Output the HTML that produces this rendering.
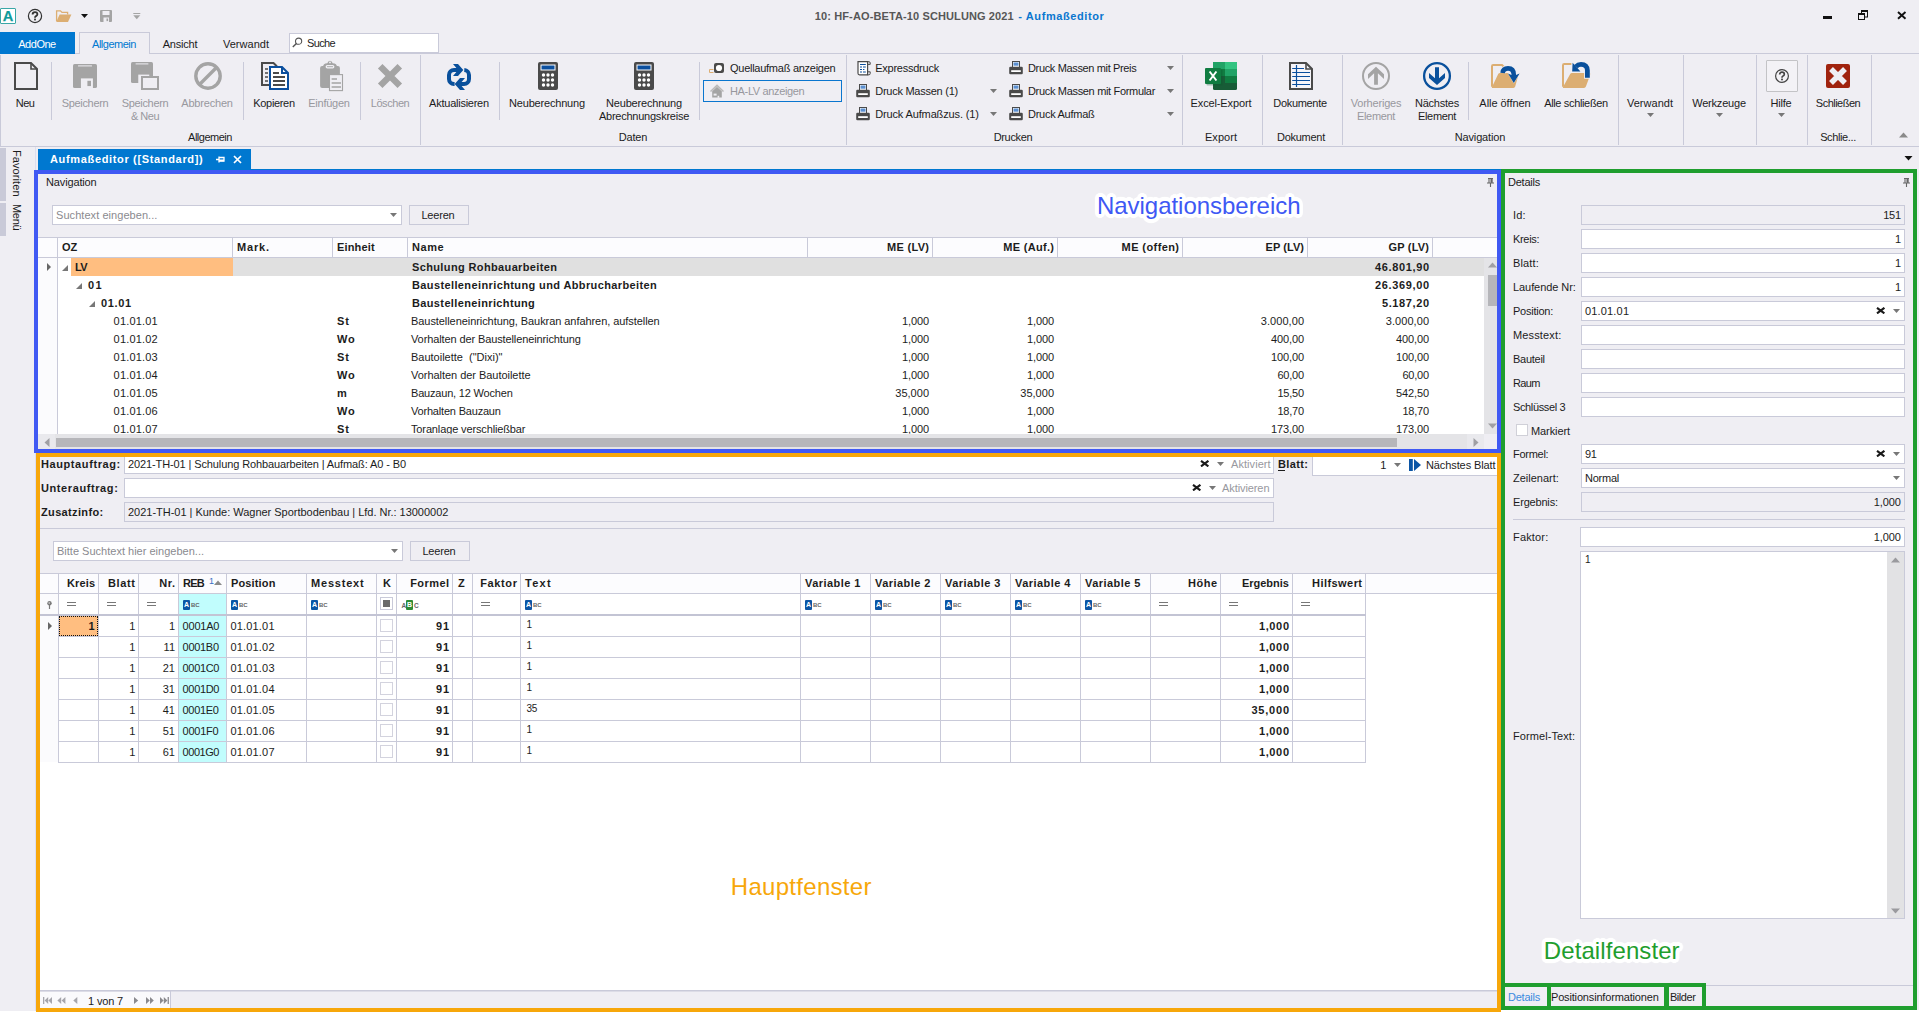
<!DOCTYPE html><html><head><meta charset="utf-8"><title>Aufmasseditor</title><style>
html,body{margin:0;padding:0}
body{width:1919px;height:1012px;overflow:hidden;background:#efeef3;font-family:"Liberation Sans",sans-serif;font-size:11px;color:#1c1c1c;position:relative}
div,span.t,svg{position:absolute;box-sizing:border-box}
span.t{white-space:pre;letter-spacing:-0.25px}
.b{font-weight:bold;letter-spacing:0.35px !important}
.d{color:#98989e}
.w{color:#fff}
</style></head><body>
<div style="left:0px;top:8px;width:16px;height:16px;background:#fff;border:1px solid #3aa7a7;border-radius:1px"></div>
<span class="t " style="left:-192px;width:400px;text-align:center;top:8.2px;line-height:16px;font-weight:bold;font-size:14.6px;color:#0e9a9a;letter-spacing:0;-webkit-text-stroke:0.25px #0e9a9a">A</span>
<svg style="left:27px;top:8px" width="16" height="16" viewBox="0 0 16 16"><circle cx="8" cy="8" r="6.6" fill="none" stroke="#333" stroke-width="1.2"/><path d="M5.6,6.5 Q5.6,4.1 8,4.1 Q10.4,4.1 10.4,6.2 Q10.4,7.4 9,8.1 Q8,8.6 8,9.7" fill="none" stroke="#333" stroke-width="1.8"/><rect x="7.1" y="10.6" width="1.8" height="1.8" fill="#333"/></svg>
<svg style="left:55px;top:9px" width="17" height="14" viewBox="0 0 17 14"><path d="M1.6,12 V1.8 H5.5 L7,3.4 H12.6 V5.5" fill="none" stroke="#dcae72" stroke-width="1.3"/><path d="M4.6,5.6 H16.4 L13,13 H1.2 Z" fill="#dcae72"/></svg>
<svg style="left:81px;top:14px" width="8" height="5" viewBox="0 0 8 5"><path d="M0,0 H7 L3.5,4 Z" fill="#111"/></svg>
<svg style="left:100px;top:10px" width="13" height="13" viewBox="0 0 13 13"><rect x="0" y="0" width="12" height="12" rx="1" fill="#a4a4a4"/><rect x="2.5" y="1" width="7" height="4" fill="#efeef3"/><rect x="3.5" y="7.5" width="5.5" height="4.5" fill="#efeef3"/><rect x="6.5" y="8.5" width="1.6" height="2.6" fill="#a4a4a4"/></svg>
<svg style="left:132.5px;top:13px" width="8" height="7" viewBox="0 0 8 7"><rect x="0.3" y="0" width="7" height="1" fill="#a4a4a4"/><path d="M0.3,2.3 H7.3 L3.8,6.3 Z" fill="#a4a4a4"/></svg>
<span class="t b" style="left:814.8px;top:9.0px;line-height:14px;letter-spacing:0.117px !important;color:#575757">10: HF-AO-BETA-10 SCHULUNG 2021</span>
<span class="t b" style="left:1018.3px;top:9.0px;line-height:14px;letter-spacing:0.591px !important;color:#0a76cf">- Aufmaßeditor</span>
<div style="left:1823px;top:16px;width:9px;height:3px;background:#111"></div>
<svg style="left:1858px;top:10px" width="10" height="10" viewBox="0 0 10 10"><rect x="3.5" y="1" width="6" height="6" fill="none" stroke="#111" stroke-width="1"/><rect x="3" y="0" width="7" height="2" fill="#111"/><rect x="0.5" y="4" width="6" height="5.5" fill="#efeef3" stroke="#111" stroke-width="1"/><rect x="0" y="3" width="7" height="2" fill="#111"/></svg>
<svg style="left:1897px;top:11px" width="10" height="9" viewBox="0 0 10 9"><path d="M1,1 L8.5,7.8 M8.5,1 L1,7.8" stroke="#111" stroke-width="1.9"/></svg>
<div style="left:0px;top:53px;width:1919px;height:1px;background:#c9cad9"></div>
<div style="left:0px;top:32px;width:75px;height:22px;background:#0078d0"></div>
<span class="t w" style="left:-163px;width:400px;text-align:center;top:36.5px;line-height:14px;letter-spacing:-0.473px !important;">AddOne</span>
<div style="left:79px;top:32px;width:71px;height:22px;background:#efeef3;border:1px solid #c9cad9;border-bottom:none"></div>
<span class="t " style="left:-86px;width:400px;text-align:center;top:37.0px;line-height:14px;letter-spacing:-0.500px !important;color:#0078d0">Allgemein</span>
<span class="t " style="left:-20px;width:400px;text-align:center;top:37.0px;line-height:14px;letter-spacing:-0.229px !important;">Ansicht</span>
<span class="t " style="left:46px;width:400px;text-align:center;top:37.0px;line-height:14px;letter-spacing:0.048px !important;">Verwandt</span>
<div style="left:289px;top:33px;width:150px;height:20px;background:#fff;border:1px solid #c9cad9"></div>
<svg style="left:292px;top:37px" width="11" height="11" viewBox="0 0 11 11"><circle cx="6.6" cy="4.2" r="3.1" fill="none" stroke="#555" stroke-width="1.1"/><path d="M4.4,6.4 L0.8,10" stroke="#555" stroke-width="1.4"/></svg>
<span class="t " style="left:307px;top:36.0px;line-height:14px;letter-spacing:-0.622px !important;">Suche</span>
<div style="left:0px;top:55px;width:1px;height:91px;background:#c9cad9"></div>
<div style="left:0px;top:146px;width:1919px;height:1px;background:#c9cad9"></div>
<div style="left:51px;top:62px;width:1px;height:58px;background:#c9cad9"></div>
<div style="left:243px;top:62px;width:1px;height:58px;background:#c9cad9"></div>
<div style="left:360px;top:62px;width:1px;height:58px;background:#c9cad9"></div>
<div style="left:499px;top:62px;width:1px;height:58px;background:#c9cad9"></div>
<div style="left:699px;top:62px;width:1px;height:58px;background:#c9cad9"></div>
<div style="left:1468px;top:62px;width:1px;height:58px;background:#c9cad9"></div>
<div style="left:420px;top:55px;width:1px;height:90px;background:#c9cad9"></div>
<div style="left:846px;top:55px;width:1px;height:90px;background:#c9cad9"></div>
<div style="left:1182px;top:55px;width:1px;height:90px;background:#c9cad9"></div>
<div style="left:1262px;top:55px;width:1px;height:90px;background:#c9cad9"></div>
<div style="left:1342px;top:55px;width:1px;height:90px;background:#c9cad9"></div>
<div style="left:1618px;top:55px;width:1px;height:90px;background:#c9cad9"></div>
<div style="left:1683px;top:55px;width:1px;height:90px;background:#c9cad9"></div>
<div style="left:1756px;top:55px;width:1px;height:90px;background:#c9cad9"></div>
<div style="left:1807px;top:55px;width:1px;height:90px;background:#c9cad9"></div>
<div style="left:1871px;top:55px;width:1px;height:90px;background:#c9cad9"></div>
<span class="t " style="left:-175px;width:400px;text-align:center;top:96.0px;line-height:14px;letter-spacing:-0.589px !important;">Neu</span>
<span class="t d" style="left:-115px;width:400px;text-align:center;top:96.0px;line-height:14px;letter-spacing:-0.316px !important;">Speichern</span>
<span class="t d" style="left:-55px;width:400px;text-align:center;top:96.0px;line-height:14px;letter-spacing:-0.316px !important;">Speichern</span>
<span class="t d" style="left:-55px;width:400px;text-align:center;top:109.0px;line-height:14px;letter-spacing:-0.468px !important;">&amp; Neu</span>
<span class="t d" style="left:7px;width:400px;text-align:center;top:96.0px;line-height:14px;letter-spacing:-0.188px !important;">Abbrechen</span>
<span class="t " style="left:74px;width:400px;text-align:center;top:96.0px;line-height:14px;letter-spacing:-0.333px !important;">Kopieren</span>
<span class="t d" style="left:129px;width:400px;text-align:center;top:96.0px;line-height:14px;letter-spacing:-0.246px !important;">Einfügen</span>
<span class="t d" style="left:190px;width:400px;text-align:center;top:96.0px;line-height:14px;letter-spacing:-0.431px !important;">Löschen</span>
<span class="t " style="left:259px;width:400px;text-align:center;top:96.0px;line-height:14px;letter-spacing:-0.248px !important;">Aktualisieren</span>
<span class="t " style="left:347px;width:400px;text-align:center;top:96.0px;line-height:14px;letter-spacing:-0.190px !important;">Neuberechnung</span>
<span class="t " style="left:444px;width:400px;text-align:center;top:96.0px;line-height:14px;letter-spacing:-0.190px !important;">Neuberechnung</span>
<span class="t " style="left:444px;width:400px;text-align:center;top:109.0px;line-height:14px;letter-spacing:-0.242px !important;">Abrechnungskreise</span>
<span class="t " style="left:1021px;width:400px;text-align:center;top:96.0px;line-height:14px;letter-spacing:-0.123px !important;">Excel-Export</span>
<span class="t " style="left:1100px;width:400px;text-align:center;top:96.0px;line-height:14px;letter-spacing:-0.306px !important;">Dokumente</span>
<span class="t d" style="left:1176px;width:400px;text-align:center;top:96.0px;line-height:14px;letter-spacing:-0.199px !important;">Vorheriges</span>
<span class="t d" style="left:1176px;width:400px;text-align:center;top:109.0px;line-height:14px;letter-spacing:-0.342px !important;">Element</span>
<span class="t " style="left:1237px;width:400px;text-align:center;top:96.0px;line-height:14px;letter-spacing:-0.236px !important;">Nächstes</span>
<span class="t " style="left:1237px;width:400px;text-align:center;top:109.0px;line-height:14px;letter-spacing:-0.342px !important;">Element</span>
<span class="t " style="left:1305px;width:400px;text-align:center;top:96.0px;line-height:14px;letter-spacing:-0.048px !important;">Alle öffnen</span>
<span class="t " style="left:1376px;width:400px;text-align:center;top:96.0px;line-height:14px;letter-spacing:-0.344px !important;">Alle schließen</span>
<span class="t " style="left:1450px;width:400px;text-align:center;top:96.0px;line-height:14px;letter-spacing:0.048px !important;">Verwandt</span>
<span class="t " style="left:1519px;width:400px;text-align:center;top:96.0px;line-height:14px;letter-spacing:-0.192px !important;">Werkzeuge</span>
<span class="t " style="left:1581px;width:400px;text-align:center;top:96.0px;line-height:14px;letter-spacing:-0.176px !important;">Hilfe</span>
<span class="t " style="left:1638px;width:400px;text-align:center;top:96.0px;line-height:14px;letter-spacing:-0.514px !important;">Schließen</span>
<span class="t " style="left:10px;width:400px;text-align:center;top:130.0px;line-height:14px;letter-spacing:-0.500px !important;">Allgemein</span>
<span class="t " style="left:433px;width:400px;text-align:center;top:130.0px;line-height:14px;letter-spacing:-0.163px !important;">Daten</span>
<span class="t " style="left:813px;width:400px;text-align:center;top:130.0px;line-height:14px;letter-spacing:-0.326px !important;">Drucken</span>
<span class="t " style="left:1021px;width:400px;text-align:center;top:130.0px;line-height:14px;letter-spacing:0.041px !important;">Export</span>
<span class="t " style="left:1101px;width:400px;text-align:center;top:130.0px;line-height:14px;letter-spacing:-0.262px !important;">Dokument</span>
<span class="t " style="left:1280px;width:400px;text-align:center;top:130.0px;line-height:14px;letter-spacing:-0.141px !important;">Navigation</span>
<span class="t " style="left:1638px;width:400px;text-align:center;top:130.0px;line-height:14px;letter-spacing:-0.379px !important;">Schlie...</span>
<svg style="left:1646.5px;top:113px" width="7" height="4" viewBox="0 0 7 4"><path d="M0,0 H7 L3.5,4 Z" fill="#777"/></svg>
<svg style="left:1715.5px;top:113px" width="7" height="4" viewBox="0 0 7 4"><path d="M0,0 H7 L3.5,4 Z" fill="#777"/></svg>
<svg style="left:1777.5px;top:113px" width="7" height="4" viewBox="0 0 7 4"><path d="M0,0 H7 L3.5,4 Z" fill="#777"/></svg>
<svg style="left:1899px;top:132px" width="9" height="6" viewBox="0 0 9 6"><path d="M0,5.5 H9 L4.5,0.5 Z" fill="#8a8a8a"/></svg>
<svg style="left:1904px;top:156px" width="9" height="5" viewBox="0 0 9 5"><path d="M0.5,0 H8.5 L4.5,4.5 Z" fill="#111"/></svg>
<svg style="left:13px;top:61px" width="26" height="30" viewBox="0 0 26 30"><path d="M2,2 H18 L24,8 V28 H2 Z" fill="none" stroke="#4a4a4a" stroke-width="2"/><path d="M18,2 V8 H24" fill="none" stroke="#4a4a4a" stroke-width="1.6"/></svg>
<svg style="left:73px;top:64px" width="24" height="24" viewBox="0 0 24 24"><rect x="0" y="0" width="24" height="24" rx="1.6" fill="#a4a4a4"/><rect x="5.04" y="1.4" width="13.919999999999998" height="1" fill="#efeef3"/><rect x="7.92" y="14.399999999999999" width="12.0" height="9.600000000000001" fill="#efeef3"/><rect x="14.399999999999999" y="16.799999999999997" width="3.5999999999999996" height="5.28" fill="#a4a4a4"/></svg>
<svg style="left:131px;top:62px" width="28" height="28" viewBox="0 0 28 28"><rect x="0" y="0" width="22" height="21" rx="1.6" fill="#a4a4a4"/><rect x="4.62" y="1.4" width="12.76" height="1" fill="#efeef3"/><rect x="7.260000000000001" y="12.6" width="11.0" height="8.4" fill="#efeef3"/><rect x="13.2" y="14.7" width="3.3" height="4.62" fill="#a4a4a4"/><rect x="11" y="15" width="16" height="12" fill="#efeef3" stroke="#a4a4a4" stroke-width="2"/></svg>
<svg style="left:193px;top:61px" width="30" height="30" viewBox="0 0 30 30"><circle cx="15" cy="15" r="12.2" fill="none" stroke="#a4a4a4" stroke-width="3.4"/><path d="M6.5,23.5 L23.5,6.5" stroke="#a4a4a4" stroke-width="3.4"/></svg>
<svg style="left:260px;top:61px" width="30" height="30" viewBox="0 0 30 30"><path d="M2,2 H13.5 L16.5,5 V6 H10 V24 H2 Z" fill="#efeef3" stroke="#4a4a4a" stroke-width="2"/><path d="M5,8 H8 M5,12 H8 M5,16 H8 M5,20 H8" stroke="#4a4a4a" stroke-width="1.6"/><path d="M10,6 H22 L28,12 V28 H10 Z" fill="#fff" stroke="#0b4f9e" stroke-width="2"/><path d="M22,6 V12 H28" fill="none" stroke="#0b4f9e" stroke-width="2"/><path d="M13,12 H19 M13,16 H25 M13,20 H25 M13,24 H25" stroke="#4a4a4a" stroke-width="1.8"/></svg>
<svg style="left:319px;top:60px" width="26" height="32" viewBox="0 0 26 32"><rect x="1.1" y="5.9" width="19.8" height="22" rx="2" fill="#a4a4a4"/><path d="M4,9.5 V7 Q4,3.2 8.3,3.2 Q9,0.7 11,0.7 Q13,0.7 13.7,3.2 Q18,3.2 18,7 V9.5 Z" fill="#a4a4a4"/><rect x="6.6" y="5" width="8.8" height="3.4" rx="1.7" fill="#efeef3"/><path d="M8,6.7 H14" stroke="#a4a4a4" stroke-width="0.9"/><circle cx="11" cy="2.4" r="0.9" fill="#efeef3"/><rect x="10.5" y="14.6" width="13" height="16" fill="#efeef3" stroke="#a4a4a4" stroke-width="1.1"/><path d="M12.6,19 H18 M12.6,23 H22 M12.6,27 H22" stroke="#a4a4a4" stroke-width="1.6"/></svg>
<svg style="left:377px;top:63px" width="26" height="26" viewBox="0 0 26 26"><path d="M3.2,3.2 L22.8,22.8 M22.8,3.2 L3.2,22.8" stroke="#a4a4a4" stroke-width="6.4"/></svg>
<svg style="left:445px;top:62px" width="28" height="30" viewBox="0 0 28 30"><path d="M9.6,22 H9 A5,5 0 0 1 4,17 V13 A5,5 0 0 1 9,8 H12" fill="none" stroke="#09509c" stroke-width="4"/><path d="M19.3,8 A5,5 0 0 1 24,13 V17 A5,5 0 0 1 19,22 H16" fill="none" stroke="#09509c" stroke-width="4"/><path d="M8,2 H13 L18.3,8 L13,13.9 H8 L11.4,10 V6 Z" fill="#09509c"/><path d="M20,28 H15 L9.7,22 L15,16.1 H20 L16.6,20 V24 Z" fill="#09509c"/></svg>
<svg style="left:538px;top:62px" width="21" height="28" viewBox="0 0 21 28"><rect x="0" y="0" width="20" height="28" rx="2" fill="#4a4a4a"/><rect x="2.5" y="2.5" width="15" height="6" fill="#fff"/><rect x="3.5" y="3.5" width="13" height="4" fill="#0b4f9e"/><circle cx="5.5" cy="13" r="1.7" fill="#fff"/><circle cx="5.5" cy="18" r="1.7" fill="#fff"/><circle cx="5.5" cy="23" r="1.7" fill="#fff"/><circle cx="10.0" cy="13" r="1.7" fill="#fff"/><circle cx="10.0" cy="18" r="1.7" fill="#fff"/><circle cx="10.0" cy="23" r="1.7" fill="#fff"/><circle cx="14.5" cy="13" r="1.7" fill="#fff"/><circle cx="14.5" cy="18" r="1.7" fill="#fff"/><circle cx="14.5" cy="23" r="1.7" fill="#fff"/></svg>
<svg style="left:634px;top:62px" width="21" height="28" viewBox="0 0 21 28"><rect x="0" y="0" width="20" height="28" rx="2" fill="#4a4a4a"/><rect x="2.5" y="2.5" width="15" height="6" fill="#fff"/><rect x="3.5" y="3.5" width="13" height="4" fill="#0b4f9e"/><circle cx="5.5" cy="13" r="1.7" fill="#fff"/><circle cx="5.5" cy="18" r="1.7" fill="#fff"/><circle cx="5.5" cy="23" r="1.7" fill="#fff"/><circle cx="10.0" cy="13" r="1.7" fill="#fff"/><circle cx="10.0" cy="18" r="1.7" fill="#fff"/><circle cx="10.0" cy="23" r="1.7" fill="#fff"/><circle cx="14.5" cy="13" r="1.7" fill="#fff"/><circle cx="14.5" cy="18" r="1.7" fill="#fff"/><circle cx="14.5" cy="23" r="1.7" fill="#fff"/></svg>
<svg style="left:1205px;top:62px" width="33" height="29" viewBox="0 0 33 29"><rect x="8" y="0" width="24" height="28" rx="1.5" fill="#185c37"/><rect x="8" y="0" width="12" height="7" fill="#21a366"/><rect x="20" y="0" width="12" height="7" fill="#33c481"/><path d="M9.5,0 H30.5 Q32,0 32,1.5 V7 H8 V1.5 Q8,0 9.5,0Z" fill="none"/><rect x="8" y="7" width="12" height="7" fill="#107c41"/><rect x="20" y="7" width="12" height="7" fill="#21a366"/><rect x="8" y="14" width="12" height="7" fill="#185c37"/><rect x="20" y="14" width="12" height="7" fill="#107c41"/><rect x="1.5" y="7.5" width="16" height="16" rx="1" fill="#0b5a2e" opacity="0.35"/><rect x="0" y="6" width="16" height="16" rx="1" fill="#107c41"/><path d="M4.6,9.5 L11.4,18.5 M11.4,9.5 L4.6,18.5" stroke="#fff" stroke-width="2"/></svg>
<svg style="left:1288px;top:61px" width="26" height="30" viewBox="0 0 26 30"><path d="M2,2 H18 L24,8 V28 H2 Z" fill="#f6f5fa" stroke="#4a4a4a" stroke-width="2"/><path d="M18,2 V8 H24" fill="none" stroke="#4a4a4a" stroke-width="1.6"/><path d="M4.2,7.5 H16 M4.2,11.5 H22 M4.2,15.5 H22 M4.2,19.5 H22 M4.2,23.5 H22" stroke="#0b4f9e" stroke-width="1.2"/><path d="M8.5,4 V26" stroke="#0b4f9e" stroke-width="1.2"/></svg>
<svg style="left:1361px;top:61px" width="30" height="30" viewBox="0 0 30 30"><circle cx="15" cy="15" r="13" fill="none" stroke="#a4a4a4" stroke-width="2"/><path d="M15,5.8 L23,13.3 V18 L16.9,12.3 V23.7 H13.1 V12.3 L7,18 V13.3 Z" fill="#a4a4a4"/></svg>
<svg style="left:1422px;top:61px" width="30" height="30" viewBox="0 0 30 30"><circle cx="15" cy="15" r="12.9" fill="none" stroke="#09509c" stroke-width="2.3"/><path d="M15,24 L23,16.9 V12 L17,17.3 V6.2 H13 V17.3 L7,12 V16.9 Z" fill="#09509c"/></svg>
<svg style="left:1489px;top:62px" width="32" height="28" viewBox="0 0 32 28"><path d="M3,24.8 V4.2 Q3,3 4.2,3 H13 L15.5,5.5 H18" fill="none" stroke="#dcae72" stroke-width="2"/><path d="M11,10.9 H28.5 Q30,10.9 29.6,12.3 L26.2,24.6 Q25.8,25.9 24.4,25.9 H3.2 Q2.6,25.9 3,25 L9.2,12 Q9.8,10.9 11,10.9 Z" fill="#dcae72"/><path d="M13.6,11 Q14,6.4 19,6.4 Q24.8,6.4 24.8,13" fill="none" stroke="#efeef3" stroke-width="6.4"/><path d="M18.6,10.8 H31.3 L24.8,21.4 Z" fill="#efeef3"/><path d="M13.6,11 Q14,6.4 19,6.4 Q24.8,6.4 24.8,13" fill="none" stroke="#09509c" stroke-width="4.6"/><path d="M19,11.4 L22.5,13 H27 L30.6,11.4 L24.8,21 Z" fill="#09509c"/></svg>
<svg style="left:1560px;top:58px" width="32" height="32" viewBox="0 0 32 32"><path d="M3,28.8 V7.2 Q3,6 4.2,6 H12" fill="none" stroke="#dcae72" stroke-width="2"/><path d="M12,15 H29.5 Q31,15 30.4,16.4 L25.9,28.6 Q25.4,29.9 24,29.9 H3.2 Q2.6,29.9 3,29 L10.2,16.1 Q10.8,15 12,15 Z" fill="#dcae72"/><path d="M27.4,20.8 V12.5 Q27.4,6.4 21,6.4 Q18,6.4 16,8.6" fill="none" stroke="#efeef3" stroke-width="6.6"/><path d="M11.4,3.5 L11.2,14.5 H21.5 Z" fill="#efeef3"/><path d="M27.4,19.8 V12.5 Q27.4,6.4 21,6.4 Q18,6.4 16,8.6" fill="none" stroke="#09509c" stroke-width="4.8"/><path d="M12.6,4.8 L12.2,13.5 H20.4 L17,9.6 Z" fill="#09509c"/></svg>
<div style="left:1766px;top:60px;width:32px;height:32px;background:#f3f2f6;border:1px solid #c3c3c6;border-radius:1px"></div>
<svg style="left:1774px;top:68px" width="16" height="16" viewBox="0 0 16 16"><circle cx="8" cy="8" r="6.4" fill="none" stroke="#444" stroke-width="1.2"/><path d="M5.7,6.5 Q5.7,4.2 8,4.2 Q10.3,4.2 10.3,6.2 Q10.3,7.4 9,8.1 Q8,8.6 8,9.7" fill="none" stroke="#444" stroke-width="1.7"/><rect x="7.1" y="10.6" width="1.8" height="1.7" fill="#444"/></svg>
<svg style="left:1826px;top:64px" width="24" height="24" viewBox="0 0 24 24"><rect width="24" height="24" rx="2" fill="#a0230e"/><path d="M5,5 L19,19 M19,5 L5,19" stroke="#efeef3" stroke-width="5.5"/></svg>
<svg style="left:708px;top:63px" width="17" height="11" viewBox="0 0 17 11"><rect x="6" y="0" width="10" height="10" rx="2" fill="#4a4a4a"/><circle cx="11" cy="5" r="3.1" fill="#fff"/><path d="M5.5,6.5 H1.5 V9.5 H5.5" fill="none" stroke="#dcae72" stroke-width="1"/></svg>
<span class="t " style="left:730px;top:61.0px;line-height:14px;letter-spacing:-0.262px !important;">Quellaufmaß anzeigen</span>
<div style="left:703px;top:80px;width:139px;height:22px;border:1px solid #0a76cf;background:#efeef3"></div>
<svg style="left:709px;top:84px" width="16" height="14" viewBox="0 0 16 14"><path d="M1.5,7.5 L8,1.4 L14.5,7.5" fill="none" stroke="#b9b9b9" stroke-width="1.5"/><path d="M3.2,7.2 L8,2.8 L12.8,7.2 V13.6 H3.2 Z" fill="#a4a4a4"/><rect x="4.6" y="9.6" width="3" height="2" fill="#efeef3"/><rect x="8.6" y="11.8" width="1.6" height="2" fill="#efeef3"/></svg>
<span class="t d" style="left:730px;top:84.0px;line-height:14px;letter-spacing:-0.353px !important;">HA-LV anzeigen</span>
<svg style="left:857px;top:61px" width="14" height="15" viewBox="0 0 14 15"><path d="M1,0.7 H10.6 V13.8 H2.5 Q1,13.8 1,12.3 Z" fill="#fff" stroke="#4a4a4a" stroke-width="1.2"/><path d="M10.6,0.7 H11.9 Q13.2,0.7 13.2,2 V3.4 H10.6 M10.6,10.8 H13.2 V12.5 Q13.2,13.8 11.9,13.8 H10.6" fill="none" stroke="#4a4a4a" stroke-width="1"/><path d="M3,3.5 H8.8 M3,6 H5 M6,6 H8.8 M3,8.5 H5 M6,8.5 H7.4 M3,11 H5 M6,11 H8.8" stroke="#0b4f9e" stroke-width="1.1"/></svg>
<span class="t " style="left:875.2px;top:61.0px;line-height:14px;letter-spacing:-0.240px !important;">Expressdruck</span>
<svg style="left:856px;top:84px" width="14" height="14" viewBox="0 0 14 14"><rect x="3.5" y="0.5" width="7" height="6" fill="#fff" stroke="#4a4a4a" stroke-width="1"/><rect x="4.5" y="1.5" width="5" height="3.2" fill="#5b8fd0"/><path d="M1.5,5.8 H12.5 Q13.8,5.8 13.8,7 V12 Q13.8,13.2 12.5,13.2 H1.5 Q0.2,13.2 0.2,12 V7 Q0.2,5.8 1.5,5.8 Z" fill="#4a4a4a"/><rect x="2.2" y="9.2" width="9.6" height="1.8" fill="#fff"/></svg>
<span class="t " style="left:875.2px;top:84.0px;line-height:14px;letter-spacing:-0.253px !important;">Druck Massen (1)</span>
<svg style="left:989.5px;top:89px" width="7" height="4" viewBox="0 0 7 4"><path d="M0,0 H7 L3.5,4 Z" fill="#777"/></svg>
<svg style="left:856px;top:107px" width="14" height="14" viewBox="0 0 14 14"><rect x="3.5" y="0.5" width="7" height="6" fill="#fff" stroke="#4a4a4a" stroke-width="1"/><rect x="4.5" y="1.5" width="5" height="3.2" fill="#5b8fd0"/><path d="M1.5,5.8 H12.5 Q13.8,5.8 13.8,7 V12 Q13.8,13.2 12.5,13.2 H1.5 Q0.2,13.2 0.2,12 V7 Q0.2,5.8 1.5,5.8 Z" fill="#4a4a4a"/><rect x="2.2" y="9.2" width="9.6" height="1.8" fill="#fff"/></svg>
<span class="t " style="left:875.2px;top:107.0px;line-height:14px;letter-spacing:-0.140px !important;">Druck Aufmaßzus. (1)</span>
<svg style="left:989.5px;top:112px" width="7" height="4" viewBox="0 0 7 4"><path d="M0,0 H7 L3.5,4 Z" fill="#777"/></svg>
<svg style="left:1009px;top:61px" width="14" height="14" viewBox="0 0 14 14"><rect x="3.5" y="0.5" width="7" height="6" fill="#fff" stroke="#4a4a4a" stroke-width="1"/><rect x="4.5" y="1.5" width="5" height="3.2" fill="#5b8fd0"/><path d="M1.5,5.8 H12.5 Q13.8,5.8 13.8,7 V12 Q13.8,13.2 12.5,13.2 H1.5 Q0.2,13.2 0.2,12 V7 Q0.2,5.8 1.5,5.8 Z" fill="#4a4a4a"/><rect x="2.2" y="9.2" width="9.6" height="1.8" fill="#fff"/></svg>
<span class="t " style="left:1028px;top:61.0px;line-height:14px;letter-spacing:-0.354px !important;">Druck Massen mit Preis</span>
<svg style="left:1166.5px;top:66px" width="7" height="4" viewBox="0 0 7 4"><path d="M0,0 H7 L3.5,4 Z" fill="#777"/></svg>
<svg style="left:1009px;top:84px" width="14" height="14" viewBox="0 0 14 14"><rect x="3.5" y="0.5" width="7" height="6" fill="#fff" stroke="#4a4a4a" stroke-width="1"/><rect x="4.5" y="1.5" width="5" height="3.2" fill="#5b8fd0"/><path d="M1.5,5.8 H12.5 Q13.8,5.8 13.8,7 V12 Q13.8,13.2 12.5,13.2 H1.5 Q0.2,13.2 0.2,12 V7 Q0.2,5.8 1.5,5.8 Z" fill="#4a4a4a"/><rect x="2.2" y="9.2" width="9.6" height="1.8" fill="#fff"/></svg>
<span class="t " style="left:1028px;top:84.0px;line-height:14px;letter-spacing:-0.324px !important;">Druck Massen mit Formular</span>
<svg style="left:1166.5px;top:89px" width="7" height="4" viewBox="0 0 7 4"><path d="M0,0 H7 L3.5,4 Z" fill="#777"/></svg>
<svg style="left:1009px;top:107px" width="14" height="14" viewBox="0 0 14 14"><rect x="3.5" y="0.5" width="7" height="6" fill="#fff" stroke="#4a4a4a" stroke-width="1"/><rect x="4.5" y="1.5" width="5" height="3.2" fill="#5b8fd0"/><path d="M1.5,5.8 H12.5 Q13.8,5.8 13.8,7 V12 Q13.8,13.2 12.5,13.2 H1.5 Q0.2,13.2 0.2,12 V7 Q0.2,5.8 1.5,5.8 Z" fill="#4a4a4a"/><rect x="2.2" y="9.2" width="9.6" height="1.8" fill="#fff"/></svg>
<span class="t " style="left:1028px;top:107.0px;line-height:14px;letter-spacing:-0.271px !important;">Druck Aufmaß</span>
<svg style="left:1166.5px;top:112px" width="7" height="4" viewBox="0 0 7 4"><path d="M0,0 H7 L3.5,4 Z" fill="#777"/></svg>
<div style="left:0px;top:148px;width:6px;height:53px;background:#c9cad8"></div>
<div style="left:0px;top:203px;width:6px;height:33px;background:#c9cad8"></div>
<div style="left:35px;top:147px;width:1px;height:864px;background:#dcdef0"></div>
<div style="left:0px;top:1010.5px;width:36px;height:1.5px;background:#fff"></div>
<span class="t" style="left:23px;top:150px;transform-origin:0 0;transform:rotate(90deg);line-height:12px;letter-spacing:0.08px">Favoriten</span>
<span class="t" style="left:23px;top:204.3px;transform-origin:0 0;transform:rotate(90deg);line-height:12px;letter-spacing:-0.3px">Menü</span>
<div style="left:38px;top:149px;width:213px;height:21px;background:#0078d0"></div>
<div style="left:38px;top:169px;width:1463px;height:1px;background:#0078d0"></div>
<span class="t b w" style="left:50px;top:152.0px;line-height:14px;letter-spacing:0.659px !important;">Aufmaßeditor ([Standard])</span>
<svg style="left:216px;top:155px" width="9" height="9" viewBox="0 0 9 9"><path d="M0,4.5 H3 M3,1.5 V7.5 M3,2.5 H8 V6 H3" fill="none" stroke="#fff" stroke-width="1.3"/><rect x="3" y="4.5" width="5" height="1.8" fill="#fff"/></svg>
<svg style="left:233px;top:155px" width="9" height="9" viewBox="0 0 9 9"><path d="M1,1 L8,8 M8,1 L1,8" stroke="#fff" stroke-width="1.7"/></svg>
<div style="left:38px;top:237px;width:1459px;height:21px;background:#fcfcfe;border-top:1px solid #c9cad9;border-bottom:1px solid #c9cad9"></div>
<div style="left:57px;top:238px;width:1px;height:19px;background:#c9cad9"></div>
<div style="left:232px;top:238px;width:1px;height:19px;background:#c9cad9"></div>
<div style="left:332px;top:238px;width:1px;height:19px;background:#c9cad9"></div>
<div style="left:407px;top:238px;width:1px;height:19px;background:#c9cad9"></div>
<div style="left:807px;top:238px;width:1px;height:19px;background:#c9cad9"></div>
<div style="left:932px;top:238px;width:1px;height:19px;background:#c9cad9"></div>
<div style="left:1057px;top:238px;width:1px;height:19px;background:#c9cad9"></div>
<div style="left:1182px;top:238px;width:1px;height:19px;background:#c9cad9"></div>
<div style="left:1307px;top:238px;width:1px;height:19px;background:#c9cad9"></div>
<div style="left:1432px;top:238px;width:1px;height:19px;background:#c9cad9"></div>
<span class="t b" style="left:62px;top:240.0px;line-height:14px;letter-spacing:-0.075px !important;">OZ</span>
<span class="t b" style="left:237px;top:240.0px;line-height:14px;letter-spacing:0.816px !important;">Mark.</span>
<span class="t b" style="left:337px;top:240.0px;line-height:14px;letter-spacing:0.155px !important;">Einheit</span>
<span class="t b" style="left:412px;top:240.0px;line-height:14px;letter-spacing:0.580px !important;">Name</span>
<span class="t b" style="right:989.69px;top:240.0px;line-height:14px;letter-spacing:0.312px !important;">ME (LV)</span>
<span class="t b" style="right:864.70px;top:240.0px;line-height:14px;letter-spacing:0.304px !important;">ME (Auf.)</span>
<span class="t b" style="right:739.60px;top:240.0px;line-height:14px;letter-spacing:0.403px !important;">ME (offen)</span>
<span class="t b" style="right:614.93px;top:240.0px;line-height:14px;letter-spacing:0.066px !important;">EP (LV)</span>
<span class="t b" style="right:489.79px;top:240.0px;line-height:14px;letter-spacing:0.213px !important;">GP (LV)</span>
<div style="left:58px;top:258px;width:1426px;height:176px;background:#fff"></div>
<div style="left:38px;top:258px;width:19px;height:176px;background:#fbfbfd"></div>
<div style="left:57px;top:258px;width:1px;height:176px;background:#c9cad9"></div>
<div style="left:233px;top:258px;width:1251px;height:18px;background:#e0e0e0"></div>
<div style="left:71px;top:258px;width:162px;height:18px;background:#ffbe80"></div>
<svg style="left:47px;top:263px" width="5" height="8" viewBox="0 0 5 8"><path d="M0,0 L4,4 L0,8 Z" fill="#666"/></svg>
<svg style="left:62px;top:265px" width="7" height="7" viewBox="0 0 7 7"><path d="M6,0 V6 H0 Z" fill="#777"/></svg>
<svg style="left:76px;top:283px" width="7" height="7" viewBox="0 0 7 7"><path d="M6,0 V6 H0 Z" fill="#777"/></svg>
<svg style="left:89px;top:301px" width="7" height="7" viewBox="0 0 7 7"><path d="M6,0 V6 H0 Z" fill="#777"/></svg>
<span class="t b" style="left:75px;top:260.0px;line-height:14px;letter-spacing:-0.540px !important;">LV</span>
<span class="t b" style="left:412px;top:260.0px;line-height:14px;letter-spacing:0.369px !important;">Schulung Rohbauarbeiten</span>
<span class="t b" style="right:489.38px;top:260.0px;line-height:14px;letter-spacing:0.621px !important;">46.801,90</span>
<span class="t b" style="left:88px;top:278.0px;line-height:14px;letter-spacing:1.266px !important;">01</span>
<span class="t b" style="left:412px;top:278.0px;line-height:14px;letter-spacing:0.385px !important;">Baustelleneinrichtung und Abbrucharbeiten</span>
<span class="t b" style="right:489.38px;top:278.0px;line-height:14px;letter-spacing:0.621px !important;">26.369,00</span>
<span class="t b" style="left:101px;top:296.0px;line-height:14px;letter-spacing:0.619px !important;">01.01</span>
<span class="t b" style="left:412px;top:296.0px;line-height:14px;letter-spacing:0.364px !important;">Baustelleneinrichtung</span>
<span class="t b" style="right:489.40px;top:296.0px;line-height:14px;letter-spacing:0.598px !important;">5.187,20</span>
<span class="t " style="left:113.6px;top:314.0px;line-height:14px;letter-spacing:0.169px !important;">01.01.01</span>
<span class="t b" style="left:337px;top:314.0px;line-height:14px;letter-spacing:0.898px !important;">St</span>
<span class="t " style="left:411px;top:314.0px;line-height:14px;letter-spacing:-0.065px !important;">Baustelleneinrichtung, Baukran anfahren, aufstellen</span>
<span class="t " style="right:990.13px;top:314.0px;line-height:14px;letter-spacing:-0.131px !important;">1,000</span>
<span class="t " style="right:865.13px;top:314.0px;line-height:14px;letter-spacing:-0.131px !important;">1,000</span>
<span class="t " style="right:614.95px;top:314.0px;line-height:14px;letter-spacing:0.055px !important;">3.000,00</span>
<span class="t " style="right:489.95px;top:314.0px;line-height:14px;letter-spacing:0.055px !important;">3.000,00</span>
<span class="t " style="left:113.6px;top:332.0px;line-height:14px;letter-spacing:0.169px !important;">01.01.02</span>
<span class="t b" style="left:337px;top:332.0px;line-height:14px;letter-spacing:0.898px !important;">Wo</span>
<span class="t " style="left:411px;top:332.0px;line-height:14px;letter-spacing:-0.111px !important;">Vorhalten der Baustelleneinrichtung</span>
<span class="t " style="right:990.13px;top:332.0px;line-height:14px;letter-spacing:-0.131px !important;">1,000</span>
<span class="t " style="right:865.13px;top:332.0px;line-height:14px;letter-spacing:-0.131px !important;">1,000</span>
<span class="t " style="right:615.15px;top:332.0px;line-height:14px;letter-spacing:-0.149px !important;">400,00</span>
<span class="t " style="right:490.15px;top:332.0px;line-height:14px;letter-spacing:-0.149px !important;">400,00</span>
<span class="t " style="left:113.6px;top:350.0px;line-height:14px;letter-spacing:0.169px !important;">01.01.03</span>
<span class="t b" style="left:337px;top:350.0px;line-height:14px;letter-spacing:0.898px !important;">St</span>
<span class="t " style="left:411px;top:350.0px;line-height:14px;letter-spacing:-0.003px !important;">Bautoilette  (&quot;Dixi)&quot;</span>
<span class="t " style="right:990.13px;top:350.0px;line-height:14px;letter-spacing:-0.131px !important;">1,000</span>
<span class="t " style="right:865.13px;top:350.0px;line-height:14px;letter-spacing:-0.131px !important;">1,000</span>
<span class="t " style="right:615.15px;top:350.0px;line-height:14px;letter-spacing:-0.149px !important;">100,00</span>
<span class="t " style="right:490.15px;top:350.0px;line-height:14px;letter-spacing:-0.149px !important;">100,00</span>
<span class="t " style="left:113.6px;top:368.0px;line-height:14px;letter-spacing:0.169px !important;">01.01.04</span>
<span class="t b" style="left:337px;top:368.0px;line-height:14px;letter-spacing:0.898px !important;">Wo</span>
<span class="t " style="left:411px;top:368.0px;line-height:14px;letter-spacing:-0.036px !important;">Vorhalten der Bautoilette</span>
<span class="t " style="right:990.13px;top:368.0px;line-height:14px;letter-spacing:-0.131px !important;">1,000</span>
<span class="t " style="right:865.13px;top:368.0px;line-height:14px;letter-spacing:-0.131px !important;">1,000</span>
<span class="t " style="right:615.26px;top:368.0px;line-height:14px;letter-spacing:-0.256px !important;">60,00</span>
<span class="t " style="right:490.26px;top:368.0px;line-height:14px;letter-spacing:-0.256px !important;">60,00</span>
<span class="t " style="left:113.6px;top:386.0px;line-height:14px;letter-spacing:0.169px !important;">01.01.05</span>
<span class="t b" style="left:337px;top:386.0px;line-height:14px;letter-spacing:0.519px !important;">m</span>
<span class="t " style="left:411px;top:386.0px;line-height:14px;letter-spacing:-0.187px !important;">Bauzaun, 12 Wochen</span>
<span class="t " style="right:989.99px;top:386.0px;line-height:14px;letter-spacing:0.011px !important;">35,000</span>
<span class="t " style="right:864.99px;top:386.0px;line-height:14px;letter-spacing:0.011px !important;">35,000</span>
<span class="t " style="right:615.26px;top:386.0px;line-height:14px;letter-spacing:-0.256px !important;">15,50</span>
<span class="t " style="right:490.15px;top:386.0px;line-height:14px;letter-spacing:-0.149px !important;">542,50</span>
<span class="t " style="left:113.6px;top:404.0px;line-height:14px;letter-spacing:0.169px !important;">01.01.06</span>
<span class="t b" style="left:337px;top:404.0px;line-height:14px;letter-spacing:0.898px !important;">Wo</span>
<span class="t " style="left:411px;top:404.0px;line-height:14px;letter-spacing:-0.191px !important;">Vorhalten Bauzaun</span>
<span class="t " style="right:990.13px;top:404.0px;line-height:14px;letter-spacing:-0.131px !important;">1,000</span>
<span class="t " style="right:865.13px;top:404.0px;line-height:14px;letter-spacing:-0.131px !important;">1,000</span>
<span class="t " style="right:615.26px;top:404.0px;line-height:14px;letter-spacing:-0.256px !important;">18,70</span>
<span class="t " style="right:490.26px;top:404.0px;line-height:14px;letter-spacing:-0.256px !important;">18,70</span>
<span class="t " style="left:113.6px;top:422.0px;line-height:14px;letter-spacing:0.169px !important;">01.01.07</span>
<span class="t b" style="left:337px;top:422.0px;line-height:14px;letter-spacing:0.898px !important;">St</span>
<span class="t " style="left:411px;top:422.0px;line-height:14px;letter-spacing:-0.131px !important;">Toranlage verschließbar</span>
<span class="t " style="right:990.13px;top:422.0px;line-height:14px;letter-spacing:-0.131px !important;">1,000</span>
<span class="t " style="right:865.13px;top:422.0px;line-height:14px;letter-spacing:-0.131px !important;">1,000</span>
<span class="t " style="right:615.15px;top:422.0px;line-height:14px;letter-spacing:-0.149px !important;">173,00</span>
<span class="t " style="right:490.15px;top:422.0px;line-height:14px;letter-spacing:-0.149px !important;">173,00</span>
<div style="left:1484px;top:258px;width:13px;height:176px;background:#e4e4e7"></div>
<svg style="left:1488px;top:262px" width="9" height="6" viewBox="0 0 9 6"><path d="M0,5.5 H9 L4.5,0.5 Z" fill="#a0a0a4"/></svg>
<div style="left:1488px;top:275px;width:9px;height:31px;background:#b6b6ba"></div>
<svg style="left:1488px;top:423px" width="9" height="6" viewBox="0 0 9 6"><path d="M0,0.5 H9 L4.5,5.5 Z" fill="#a0a0a4"/></svg>
<div style="left:38px;top:434px;width:1446px;height:15px;background:#e4e4e7"></div>
<div style="left:38px;top:434px;width:17px;height:15px;background:#e9e9ed"></div>
<div style="left:1467px;top:434px;width:17px;height:15px;background:#e9e9ed"></div>
<div style="left:56px;top:438px;width:1341px;height:9px;background:#b6b6ba"></div>
<svg style="left:44px;top:438px" width="6" height="9" viewBox="0 0 6 9"><path d="M5.5,0 V9 L0.5,4.5 Z" fill="#a0a0a4"/></svg>
<svg style="left:1473px;top:438px" width="6" height="9" viewBox="0 0 6 9"><path d="M0.5,0 V9 L5.5,4.5 Z" fill="#a0a0a4"/></svg>
<span class="t " style="left:46px;top:175.0px;line-height:14px;letter-spacing:-0.141px !important;">Navigation</span>
<svg style="left:1486px;top:178px" width="9" height="9" viewBox="0 0 9 9"><path d="M2,0.5 H7 M3,0.5 V4.5 M6,0.5 V4.5 M1,5 H8 M4.5,5 V9" fill="none" stroke="#666" stroke-width="1.1"/><rect x="4.5" y="0.5" width="1.8" height="4.2" fill="#666"/></svg>
<div style="left:52px;top:205px;width:350px;height:20px;background:#fff;border:1px solid #c9cad9"></div>
<span class="t " style="left:56px;top:208.0px;line-height:14px;letter-spacing:0.058px !important;color:#8a8a8f">Suchtext eingeben...</span>
<svg style="left:390.0px;top:213px" width="7" height="4" viewBox="0 0 7 4"><path d="M0,0 H7 L3.5,4 Z" fill="#777"/></svg>
<div style="left:409px;top:205px;width:60px;height:20px;background:#efeef3;border:1px solid #c9cad9"></div>
<span class="t " style="left:238px;width:400px;text-align:center;top:208.0px;line-height:14px;letter-spacing:-0.190px !important;">Leeren</span>
<span class="t " style="left:1097px;top:191.0px;line-height:30px;letter-spacing:-0.036px !important;font-size:24px;color:#3e58f4;text-shadow:3.70px 0.00px 0.8px #fff,3.57px 0.96px 0.8px #fff,3.20px 1.85px 0.8px #fff,2.62px 2.62px 0.8px #fff,1.85px 3.20px 0.8px #fff,0.96px 3.57px 0.8px #fff,0.00px 3.70px 0.8px #fff,-0.96px 3.57px 0.8px #fff,-1.85px 3.20px 0.8px #fff,-2.62px 2.62px 0.8px #fff,-3.20px 1.85px 0.8px #fff,-3.57px 0.96px 0.8px #fff,-3.70px 0.00px 0.8px #fff,-3.57px -0.96px 0.8px #fff,-3.20px -1.85px 0.8px #fff,-2.62px -2.62px 0.8px #fff,-1.85px -3.20px 0.8px #fff,-0.96px -3.57px 0.8px #fff,-0.00px -3.70px 0.8px #fff,0.96px -3.57px 0.8px #fff,1.85px -3.20px 0.8px #fff,2.62px -2.62px 0.8px #fff,3.20px -1.85px 0.8px #fff,3.57px -0.96px 0.8px #fff,2.40px 0.00px 0.8px #fff,2.16px 1.04px 0.8px #fff,1.50px 1.88px 0.8px #fff,0.53px 2.34px 0.8px #fff,-0.53px 2.34px 0.8px #fff,-1.50px 1.88px 0.8px #fff,-2.16px 1.04px 0.8px #fff,-2.40px 0.00px 0.8px #fff,-2.16px -1.04px 0.8px #fff,-1.50px -1.88px 0.8px #fff,-0.53px -2.34px 0.8px #fff,0.53px -2.34px 0.8px #fff,1.50px -1.88px 0.8px #fff,2.16px -1.04px 0.8px #fff,1.20px 0.00px 0.8px #fff,0.85px 0.85px 0.8px #fff,0.00px 1.20px 0.8px #fff,-0.85px 0.85px 0.8px #fff,-1.20px 0.00px 0.8px #fff,-0.85px -0.85px 0.8px #fff,-0.00px -1.20px 0.8px #fff,0.85px -0.85px 0.8px #fff;">Navigationsbereich</span>
<div style="left:34px;top:170px;width:1467px;height:283px;border:4px solid #4059f3"></div>
<span class="t b" style="left:41px;top:457.0px;line-height:14px;letter-spacing:0.591px !important;">Hauptauftrag:</span>
<span class="t b" style="left:41px;top:481.0px;line-height:14px;letter-spacing:0.594px !important;">Unterauftrag:</span>
<span class="t b" style="left:41px;top:505.0px;line-height:14px;letter-spacing:0.354px !important;">Zusatzinfo:</span>
<div style="left:124px;top:454px;width:1150px;height:20px;background:#fff;border:1px solid #c9cad9"></div>
<div style="left:124px;top:478px;width:1150px;height:20px;background:#fff;border:1px solid #c9cad9"></div>
<div style="left:124px;top:502px;width:1150px;height:20px;background:#efeef3;border:1px solid #c9cad9"></div>
<span class="t " style="left:128px;top:457.0px;line-height:14px;letter-spacing:-0.112px !important;">2021-TH-01 | Schulung Rohbauarbeiten | Aufmaß: A0 - B0</span>
<span class="t " style="left:128px;top:505.0px;line-height:14px;letter-spacing:-0.018px !important;">2021-TH-01 | Kunde: Wagner Sportbodenbau | Lfd. Nr.: 13000002</span>
<svg style="left:1199.8px;top:459.9px" width="9.4" height="7.2" viewBox="0 0 9.4 7.2"><path d="M1,0.8 L8.4,6.4 M8.4,0.8 L1,6.4" stroke="#1a1a1a" stroke-width="2.1"/></svg>
<svg style="left:1217.0px;top:462px" width="7" height="4" viewBox="0 0 7 4"><path d="M0,0 H7 L3.5,4 Z" fill="#777"/></svg>
<span class="t d" style="left:1231px;top:457.0px;line-height:14px;letter-spacing:0.060px !important;">Aktiviert</span>
<svg style="left:1191.8px;top:483.9px" width="9.4" height="7.2" viewBox="0 0 9.4 7.2"><path d="M1,0.8 L8.4,6.4 M8.4,0.8 L1,6.4" stroke="#1a1a1a" stroke-width="2.1"/></svg>
<svg style="left:1209.0px;top:486px" width="7" height="4" viewBox="0 0 7 4"><path d="M0,0 H7 L3.5,4 Z" fill="#777"/></svg>
<span class="t d" style="left:1222px;top:481.0px;line-height:14px;letter-spacing:-0.089px !important;">Aktivieren</span>
<span class="t b" style="left:1278px;top:457.0px;line-height:14px;letter-spacing:0.378px !important;">Blatt:</span>
<div style="left:1278px;top:469.5px;width:7px;height:1.3px;background:#1c1c1c"></div>
<div style="left:1312px;top:454px;width:186px;height:22px;background:#fff;border:1px solid #c9cad9"></div>
<span class="t " style="right:533.00px;top:458.0px;line-height:14px;">1</span>
<svg style="left:1394.0px;top:463px" width="7" height="4" viewBox="0 0 7 4"><path d="M0,0 H7 L3.5,4 Z" fill="#777"/></svg>
<svg style="left:1409px;top:459px" width="13" height="12" viewBox="0 0 13 12"><rect x="0" y="0" width="3.8" height="12" fill="#0b55a5"/><path d="M5,0 L12,6 L5,12 Z" fill="#0b55a5"/></svg>
<span class="t " style="left:1426px;top:458.0px;line-height:14px;letter-spacing:-0.102px !important;">Nächstes Blatt</span>
<div style="left:40px;top:528px;width:1457px;height:1px;background:#c9cad9"></div>
<div style="left:53px;top:541px;width:350px;height:20px;background:#fff;border:1px solid #c9cad9"></div>
<span class="t " style="left:57px;top:544.0px;line-height:14px;letter-spacing:0.008px !important;color:#8a8a8f">Bitte Suchtext hier eingeben...</span>
<svg style="left:391.0px;top:549px" width="7" height="4" viewBox="0 0 7 4"><path d="M0,0 H7 L3.5,4 Z" fill="#777"/></svg>
<div style="left:410px;top:541px;width:60px;height:20px;background:#efeef3;border:1px solid #c9cad9"></div>
<span class="t " style="left:239px;width:400px;text-align:center;top:544.0px;line-height:14px;letter-spacing:-0.190px !important;">Leeren</span>
<div style="left:40px;top:573px;width:1457px;height:417px;background:#fff"></div>
<div style="left:40px;top:573px;width:1457px;height:21px;background:#fcfcfe;border-top:1px solid #c9cad9;border-bottom:1px solid #c9cad9"></div>
<div style="left:40px;top:594px;width:18px;height:168px;background:#fbfbfd"></div>
<div style="left:179px;top:594px;width:47px;height:168px;background:#c1fdfd"></div>
<div style="left:59px;top:616px;width:39px;height:20px;background:#ffbe80;border:1px dotted #111"></div>
<div style="left:58px;top:574px;width:1px;height:189px;background:#c9cad9"></div>
<div style="left:98px;top:574px;width:1px;height:189px;background:#c9cad9"></div>
<div style="left:138px;top:574px;width:1px;height:189px;background:#c9cad9"></div>
<div style="left:178px;top:574px;width:1px;height:189px;background:#c9cad9"></div>
<div style="left:226px;top:574px;width:1px;height:189px;background:#c9cad9"></div>
<div style="left:306px;top:574px;width:1px;height:189px;background:#c9cad9"></div>
<div style="left:376px;top:574px;width:1px;height:189px;background:#c9cad9"></div>
<div style="left:396px;top:574px;width:1px;height:189px;background:#c9cad9"></div>
<div style="left:452px;top:574px;width:1px;height:189px;background:#c9cad9"></div>
<div style="left:472px;top:574px;width:1px;height:189px;background:#c9cad9"></div>
<div style="left:520px;top:574px;width:1px;height:189px;background:#c9cad9"></div>
<div style="left:800px;top:574px;width:1px;height:189px;background:#c9cad9"></div>
<div style="left:870px;top:574px;width:1px;height:189px;background:#c9cad9"></div>
<div style="left:940px;top:574px;width:1px;height:189px;background:#c9cad9"></div>
<div style="left:1010px;top:574px;width:1px;height:189px;background:#c9cad9"></div>
<div style="left:1080px;top:574px;width:1px;height:189px;background:#c9cad9"></div>
<div style="left:1150px;top:574px;width:1px;height:189px;background:#c9cad9"></div>
<div style="left:1220px;top:574px;width:1px;height:189px;background:#c9cad9"></div>
<div style="left:1292px;top:574px;width:1px;height:189px;background:#c9cad9"></div>
<div style="left:1365px;top:574px;width:1px;height:189px;background:#c9cad9"></div>
<div style="left:40px;top:614px;width:1326px;height:2px;background:#c3c4d4"></div>
<div style="left:58px;top:636px;width:1308px;height:1px;background:#c9cad9"></div>
<div style="left:58px;top:657px;width:1308px;height:1px;background:#c9cad9"></div>
<div style="left:58px;top:678px;width:1308px;height:1px;background:#c9cad9"></div>
<div style="left:58px;top:699px;width:1308px;height:1px;background:#c9cad9"></div>
<div style="left:58px;top:720px;width:1308px;height:1px;background:#c9cad9"></div>
<div style="left:58px;top:741px;width:1308px;height:1px;background:#c9cad9"></div>
<div style="left:58px;top:762px;width:1308px;height:1px;background:#c9cad9"></div>
<span class="t b" style="right:1823.88px;top:576.0px;line-height:14px;letter-spacing:0.121px !important;">Kreis</span>
<span class="t b" style="right:1783.36px;top:576.0px;line-height:14px;letter-spacing:0.639px !important;">Blatt</span>
<span class="t b" style="right:1743.44px;top:576.0px;line-height:14px;letter-spacing:0.563px !important;">Nr.</span>
<span class="t b" style="right:1469.57px;top:576.0px;line-height:14px;letter-spacing:0.425px !important;">Formel</span>
<span class="t b" style="right:1401.36px;top:576.0px;line-height:14px;letter-spacing:0.637px !important;">Faktor</span>
<span class="t b" style="right:701.53px;top:576.0px;line-height:14px;letter-spacing:0.467px !important;">Höhe</span>
<span class="t b" style="right:630.00px;top:576.0px;line-height:14px;letter-spacing:0.005px !important;">Ergebnis</span>
<span class="t b" style="right:556.57px;top:576.0px;line-height:14px;letter-spacing:0.430px !important;">Hilfswert</span>
<span class="t b" style="left:183px;top:576.0px;line-height:14px;letter-spacing:-0.812px !important;">REB</span>
<span class="t b" style="left:231px;top:576.0px;line-height:14px;letter-spacing:0.144px !important;">Position</span>
<span class="t b" style="left:311px;top:576.0px;line-height:14px;letter-spacing:0.803px !important;">Messtext</span>
<span class="t b" style="left:383px;top:576.0px;line-height:14px;">K</span>
<span class="t b" style="left:458px;top:576.0px;line-height:14px;">Z</span>
<span class="t b" style="left:525px;top:576.0px;line-height:14px;letter-spacing:1.300px !important;">Text</span>
<span class="t b" style="left:805px;top:576.0px;line-height:14px;letter-spacing:0.448px !important;">Variable 1</span>
<span class="t b" style="left:875px;top:576.0px;line-height:14px;letter-spacing:0.448px !important;">Variable 2</span>
<span class="t b" style="left:945px;top:576.0px;line-height:14px;letter-spacing:0.448px !important;">Variable 3</span>
<span class="t b" style="left:1015px;top:576.0px;line-height:14px;letter-spacing:0.448px !important;">Variable 4</span>
<span class="t b" style="left:1085px;top:576.0px;line-height:14px;letter-spacing:0.448px !important;">Variable 5</span>
<span class="t " style="left:209px;top:574.0px;line-height:14px;font-size:9px;color:#3a6fc4">1</span>
<svg style="left:214px;top:580px" width="8" height="5" viewBox="0 0 8 5"><path d="M0,5 H8 L4,0.5 Z" fill="#8a8a8a"/></svg>
<svg style="left:46.5px;top:600.5px" width="5" height="8" viewBox="0 0 5 8"><circle cx="2.5" cy="2.3" r="2.2" fill="#7a7a7a"/><circle cx="2.2" cy="2" r="0.8" fill="#ddd"/><path d="M2.5,4 V8" stroke="#7a7a7a" stroke-width="1.2"/></svg>
<svg style="left:67px;top:602px" width="9" height="4" viewBox="0 0 9 4"><path d="M0,0.5 H9 M0,3.5 H9" stroke="#777" stroke-width="1"/></svg>
<svg style="left:107px;top:602px" width="9" height="4" viewBox="0 0 9 4"><path d="M0,0.5 H9 M0,3.5 H9" stroke="#777" stroke-width="1"/></svg>
<svg style="left:147px;top:602px" width="9" height="4" viewBox="0 0 9 4"><path d="M0,0.5 H9 M0,3.5 H9" stroke="#777" stroke-width="1"/></svg>
<svg style="left:481px;top:602px" width="9" height="4" viewBox="0 0 9 4"><path d="M0,0.5 H9 M0,3.5 H9" stroke="#777" stroke-width="1"/></svg>
<svg style="left:1159px;top:602px" width="9" height="4" viewBox="0 0 9 4"><path d="M0,0.5 H9 M0,3.5 H9" stroke="#777" stroke-width="1"/></svg>
<svg style="left:1229px;top:602px" width="9" height="4" viewBox="0 0 9 4"><path d="M0,0.5 H9 M0,3.5 H9" stroke="#777" stroke-width="1"/></svg>
<svg style="left:1301px;top:602px" width="9" height="4" viewBox="0 0 9 4"><path d="M0,0.5 H9 M0,3.5 H9" stroke="#777" stroke-width="1"/></svg>
<div style="left:183px;top:599.5px;width:7px;height:10px;background:#0b55a5;border-radius:1px"></div>
<span class="t" style="left:183px;top:600px;width:7px;text-align:center;line-height:9px;font-size:7px;font-weight:bold;color:#fff;letter-spacing:0">A</span>
<span class="t" style="left:191px;top:600.5px;line-height:9px;font-size:6px;font-weight:bold;color:#666;letter-spacing:-0.1px">BC</span>
<div style="left:231px;top:599.5px;width:7px;height:10px;background:#0b55a5;border-radius:1px"></div>
<span class="t" style="left:231px;top:600px;width:7px;text-align:center;line-height:9px;font-size:7px;font-weight:bold;color:#fff;letter-spacing:0">A</span>
<span class="t" style="left:239px;top:600.5px;line-height:9px;font-size:6px;font-weight:bold;color:#666;letter-spacing:-0.1px">BC</span>
<div style="left:311px;top:599.5px;width:7px;height:10px;background:#0b55a5;border-radius:1px"></div>
<span class="t" style="left:311px;top:600px;width:7px;text-align:center;line-height:9px;font-size:7px;font-weight:bold;color:#fff;letter-spacing:0">A</span>
<span class="t" style="left:319px;top:600.5px;line-height:9px;font-size:6px;font-weight:bold;color:#666;letter-spacing:-0.1px">BC</span>
<div style="left:525px;top:599.5px;width:7px;height:10px;background:#0b55a5;border-radius:1px"></div>
<span class="t" style="left:525px;top:600px;width:7px;text-align:center;line-height:9px;font-size:7px;font-weight:bold;color:#fff;letter-spacing:0">A</span>
<span class="t" style="left:533px;top:600.5px;line-height:9px;font-size:6px;font-weight:bold;color:#666;letter-spacing:-0.1px">BC</span>
<div style="left:805px;top:599.5px;width:7px;height:10px;background:#0b55a5;border-radius:1px"></div>
<span class="t" style="left:805px;top:600px;width:7px;text-align:center;line-height:9px;font-size:7px;font-weight:bold;color:#fff;letter-spacing:0">A</span>
<span class="t" style="left:813px;top:600.5px;line-height:9px;font-size:6px;font-weight:bold;color:#666;letter-spacing:-0.1px">BC</span>
<div style="left:875px;top:599.5px;width:7px;height:10px;background:#0b55a5;border-radius:1px"></div>
<span class="t" style="left:875px;top:600px;width:7px;text-align:center;line-height:9px;font-size:7px;font-weight:bold;color:#fff;letter-spacing:0">A</span>
<span class="t" style="left:883px;top:600.5px;line-height:9px;font-size:6px;font-weight:bold;color:#666;letter-spacing:-0.1px">BC</span>
<div style="left:945px;top:599.5px;width:7px;height:10px;background:#0b55a5;border-radius:1px"></div>
<span class="t" style="left:945px;top:600px;width:7px;text-align:center;line-height:9px;font-size:7px;font-weight:bold;color:#fff;letter-spacing:0">A</span>
<span class="t" style="left:953px;top:600.5px;line-height:9px;font-size:6px;font-weight:bold;color:#666;letter-spacing:-0.1px">BC</span>
<div style="left:1015px;top:599.5px;width:7px;height:10px;background:#0b55a5;border-radius:1px"></div>
<span class="t" style="left:1015px;top:600px;width:7px;text-align:center;line-height:9px;font-size:7px;font-weight:bold;color:#fff;letter-spacing:0">A</span>
<span class="t" style="left:1023px;top:600.5px;line-height:9px;font-size:6px;font-weight:bold;color:#666;letter-spacing:-0.1px">BC</span>
<div style="left:1085px;top:599.5px;width:7px;height:10px;background:#0b55a5;border-radius:1px"></div>
<span class="t" style="left:1085px;top:600px;width:7px;text-align:center;line-height:9px;font-size:7px;font-weight:bold;color:#fff;letter-spacing:0">A</span>
<span class="t" style="left:1093px;top:600.5px;line-height:9px;font-size:6px;font-weight:bold;color:#666;letter-spacing:-0.1px">BC</span>
<span class="t" style="left:401.5px;top:600.5px;line-height:9px;font-size:6.5px;font-weight:bold;color:#666;letter-spacing:0">A</span>
<div style="left:406px;top:599.5px;width:7px;height:10px;background:#2e8b36;border-radius:1px"></div>
<span class="t" style="left:406px;top:600px;width:7px;text-align:center;line-height:9px;font-size:7px;font-weight:bold;color:#fff;letter-spacing:0">B</span>
<span class="t" style="left:414px;top:600.5px;line-height:9px;font-size:6.5px;font-weight:bold;color:#666;letter-spacing:0">C</span>
<div style="left:380px;top:597px;width:13px;height:13px;background:#fff;border:1px solid #c9cad9"></div>
<div style="left:383px;top:600px;width:7px;height:7px;background:#6a6a6a"></div>
<svg style="left:48px;top:622px" width="5" height="8" viewBox="0 0 5 8"><path d="M0,0 L4,4 L0,8 Z" fill="#666"/></svg>
<span class="t b" style="right:1824.00px;top:619.0px;line-height:14px;">1</span>
<span class="t " style="right:1784.00px;top:619.0px;line-height:14px;">1</span>
<span class="t " style="right:1744.00px;top:619.0px;line-height:14px;letter-spacing:0">1</span>
<span class="t " style="left:182.6px;top:619.0px;line-height:14px;letter-spacing:-0.225px !important;">0001A0</span>
<span class="t " style="left:230.5px;top:619.0px;line-height:14px;letter-spacing:0.169px !important;">01.01.01</span>
<div style="left:380px;top:619px;width:13px;height:13px;background:#fff;border:1px solid #d3d3de"></div>
<span class="t b" style="right:1469.23px;top:619.0px;line-height:14px;letter-spacing:0.766px !important;">91</span>
<span class="t " style="left:526.5px;top:618.0px;line-height:14px;font-size:10px">1</span>
<span class="t b" style="right:629.36px;top:619.0px;line-height:14px;letter-spacing:0.644px !important;">1,000</span>
<span class="t " style="right:1784.00px;top:640.0px;line-height:14px;">1</span>
<span class="t " style="right:1744.00px;top:640.0px;line-height:14px;letter-spacing:0">11</span>
<span class="t " style="left:182.6px;top:640.0px;line-height:14px;letter-spacing:-0.305px !important;">0001B0</span>
<span class="t " style="left:230.5px;top:640.0px;line-height:14px;letter-spacing:0.169px !important;">01.01.02</span>
<div style="left:380px;top:640px;width:13px;height:13px;background:#fff;border:1px solid #d3d3de"></div>
<span class="t b" style="right:1469.23px;top:640.0px;line-height:14px;letter-spacing:0.766px !important;">91</span>
<span class="t " style="left:526.5px;top:639.0px;line-height:14px;font-size:10px">1</span>
<span class="t b" style="right:629.36px;top:640.0px;line-height:14px;letter-spacing:0.644px !important;">1,000</span>
<span class="t " style="right:1784.00px;top:661.0px;line-height:14px;">1</span>
<span class="t " style="right:1744.00px;top:661.0px;line-height:14px;letter-spacing:0">21</span>
<span class="t " style="left:182.6px;top:661.0px;line-height:14px;letter-spacing:-0.346px !important;">0001C0</span>
<span class="t " style="left:230.5px;top:661.0px;line-height:14px;letter-spacing:0.169px !important;">01.01.03</span>
<div style="left:380px;top:661px;width:13px;height:13px;background:#fff;border:1px solid #d3d3de"></div>
<span class="t b" style="right:1469.23px;top:661.0px;line-height:14px;letter-spacing:0.766px !important;">91</span>
<span class="t " style="left:526.5px;top:660.0px;line-height:14px;font-size:10px">1</span>
<span class="t b" style="right:629.36px;top:661.0px;line-height:14px;letter-spacing:0.644px !important;">1,000</span>
<span class="t " style="right:1784.00px;top:682.0px;line-height:14px;">1</span>
<span class="t " style="right:1744.00px;top:682.0px;line-height:14px;letter-spacing:0">31</span>
<span class="t " style="left:182.6px;top:682.0px;line-height:14px;letter-spacing:-0.346px !important;">0001D0</span>
<span class="t " style="left:230.5px;top:682.0px;line-height:14px;letter-spacing:0.169px !important;">01.01.04</span>
<div style="left:380px;top:682px;width:13px;height:13px;background:#fff;border:1px solid #d3d3de"></div>
<span class="t b" style="right:1469.23px;top:682.0px;line-height:14px;letter-spacing:0.766px !important;">91</span>
<span class="t " style="left:526.5px;top:681.0px;line-height:14px;font-size:10px">1</span>
<span class="t b" style="right:629.36px;top:682.0px;line-height:14px;letter-spacing:0.644px !important;">1,000</span>
<span class="t " style="right:1784.00px;top:703.0px;line-height:14px;">1</span>
<span class="t " style="right:1744.00px;top:703.0px;line-height:14px;letter-spacing:0">41</span>
<span class="t " style="left:182.6px;top:703.0px;line-height:14px;letter-spacing:-0.345px !important;">0001E0</span>
<span class="t " style="left:230.5px;top:703.0px;line-height:14px;letter-spacing:0.169px !important;">01.01.05</span>
<div style="left:380px;top:703px;width:13px;height:13px;background:#fff;border:1px solid #d3d3de"></div>
<span class="t b" style="right:1469.23px;top:703.0px;line-height:14px;letter-spacing:0.766px !important;">91</span>
<span class="t " style="left:526.5px;top:702.0px;line-height:14px;font-size:10px">35</span>
<span class="t b" style="right:629.21px;top:703.0px;line-height:14px;letter-spacing:0.791px !important;">35,000</span>
<span class="t " style="right:1784.00px;top:724.0px;line-height:14px;">1</span>
<span class="t " style="right:1744.00px;top:724.0px;line-height:14px;letter-spacing:0">51</span>
<span class="t " style="left:182.6px;top:724.0px;line-height:14px;letter-spacing:-0.261px !important;">0001F0</span>
<span class="t " style="left:230.5px;top:724.0px;line-height:14px;letter-spacing:0.169px !important;">01.01.06</span>
<div style="left:380px;top:724px;width:13px;height:13px;background:#fff;border:1px solid #d3d3de"></div>
<span class="t b" style="right:1469.23px;top:724.0px;line-height:14px;letter-spacing:0.766px !important;">91</span>
<span class="t " style="left:526.5px;top:723.0px;line-height:14px;font-size:10px">1</span>
<span class="t b" style="right:629.36px;top:724.0px;line-height:14px;letter-spacing:0.644px !important;">1,000</span>
<span class="t " style="right:1784.00px;top:745.0px;line-height:14px;">1</span>
<span class="t " style="right:1744.00px;top:745.0px;line-height:14px;letter-spacing:0">61</span>
<span class="t " style="left:182.6px;top:745.0px;line-height:14px;letter-spacing:-0.469px !important;">0001G0</span>
<span class="t " style="left:230.5px;top:745.0px;line-height:14px;letter-spacing:0.169px !important;">01.01.07</span>
<div style="left:380px;top:745px;width:13px;height:13px;background:#fff;border:1px solid #d3d3de"></div>
<span class="t b" style="right:1469.23px;top:745.0px;line-height:14px;letter-spacing:0.766px !important;">91</span>
<span class="t " style="left:526.5px;top:744.0px;line-height:14px;font-size:10px">1</span>
<span class="t b" style="right:629.36px;top:745.0px;line-height:14px;letter-spacing:0.644px !important;">1,000</span>
<div style="left:40px;top:990px;width:1457px;height:18px;background:#efeef3;border-top:1px solid #c9cad9"></div>
<div style="left:40px;top:991px;width:130px;height:17px;background:#fafafc"></div>
<div style="left:40px;top:991px;width:1457px;height:1px;background:#dcdce6"></div>
<div style="left:170px;top:991px;width:1px;height:17px;background:#c9cad9"></div>
<svg style="left:43px;top:997px" width="10" height="7" viewBox="0 0 10 7"><rect x="0" y="0" width="1.3" height="7" fill="#a6a6ac"/><path d="M5.2,0 V7 L1.6,3.5 Z M9,0 V7 L5.4,3.5 Z" fill="#a6a6ac"/></svg>
<svg style="left:57px;top:997px" width="9" height="7" viewBox="0 0 9 7"><path d="M4.2,0 V7 L0.4,3.5 Z M8.4,0 V7 L4.6,3.5 Z" fill="#a6a6ac"/></svg>
<svg style="left:73px;top:997px" width="5" height="7" viewBox="0 0 5 7"><path d="M4.3,0 V7 L0.3,3.5 Z" fill="#a6a6ac"/></svg>
<span class="t " style="left:88px;top:994.0px;line-height:14px;letter-spacing:-0.147px !important;">1 von 7</span>
<svg style="left:134px;top:997px" width="5" height="7" viewBox="0 0 5 7"><path d="M0,0 V7 L4.2,3.5 Z" fill="#8a8a8e"/></svg>
<svg style="left:146px;top:997px" width="9" height="7" viewBox="0 0 9 7"><path d="M0,0 V7 L3.8,3.5 Z M4,0 V7 L7.8,3.5 Z" fill="#8a8a8e"/></svg>
<svg style="left:160px;top:997px" width="10" height="7" viewBox="0 0 10 7"><path d="M0,0 V7 L3.6,3.5 Z M3.8,0 V7 L7.4,3.5 Z" fill="#8a8a8e"/><rect x="7.6" y="0" width="1.3" height="7" fill="#8a8a8e"/></svg>
<span class="t " style="left:730.8px;top:872.4px;line-height:30px;letter-spacing:0.290px !important;font-size:24px;color:#f7a70a">Hauptfenster</span>
<div style="left:36px;top:453px;width:1465px;height:559px;border:4px solid #f7a70a"></div>
<span class="t " style="left:1508px;top:175.0px;line-height:14px;letter-spacing:-0.237px !important;">Details</span>
<svg style="left:1902px;top:178px" width="9" height="9" viewBox="0 0 9 9"><path d="M2,0.5 H7 M3,0.5 V4.5 M6,0.5 V4.5 M1,5 H8 M4.5,5 V9" fill="none" stroke="#666" stroke-width="1.1"/><rect x="4.5" y="0.5" width="1.8" height="4.2" fill="#666"/></svg>
<span class="t " style="left:1513px;top:208.0px;line-height:14px;letter-spacing:0.185px !important;">Id:</span>
<div style="left:1581px;top:205px;width:324px;height:20px;background:#efeef3;border:1px solid #c9cad9"></div>
<span class="t " style="left:1513px;top:232.0px;line-height:14px;letter-spacing:-0.324px !important;">Kreis:</span>
<div style="left:1581px;top:229px;width:324px;height:20px;background:#fff;border:1px solid #c9cad9"></div>
<span class="t " style="left:1513px;top:256.0px;line-height:14px;letter-spacing:0.126px !important;">Blatt:</span>
<div style="left:1581px;top:253px;width:324px;height:20px;background:#fff;border:1px solid #c9cad9"></div>
<span class="t " style="left:1513px;top:280.0px;line-height:14px;letter-spacing:-0.073px !important;">Laufende Nr:</span>
<div style="left:1581px;top:277px;width:324px;height:20px;background:#fff;border:1px solid #c9cad9"></div>
<span class="t " style="left:1513px;top:304.0px;line-height:14px;letter-spacing:-0.236px !important;">Position:</span>
<div style="left:1581px;top:301px;width:324px;height:20px;background:#fff;border:1px solid #c9cad9"></div>
<span class="t " style="left:1513px;top:328.0px;line-height:14px;letter-spacing:0.141px !important;">Messtext:</span>
<div style="left:1581px;top:325px;width:324px;height:20px;background:#fff;border:1px solid #c9cad9"></div>
<span class="t " style="left:1513px;top:352.0px;line-height:14px;letter-spacing:-0.272px !important;">Bauteil</span>
<div style="left:1581px;top:349px;width:324px;height:20px;background:#fff;border:1px solid #c9cad9"></div>
<span class="t " style="left:1513px;top:376.0px;line-height:14px;letter-spacing:-0.681px !important;">Raum</span>
<div style="left:1581px;top:373px;width:324px;height:20px;background:#fff;border:1px solid #c9cad9"></div>
<span class="t " style="left:1513px;top:400.0px;line-height:14px;letter-spacing:-0.365px !important;">Schlüssel 3</span>
<div style="left:1581px;top:397px;width:324px;height:20px;background:#fff;border:1px solid #c9cad9"></div>
<span class="t " style="left:1513px;top:447.0px;line-height:14px;letter-spacing:-0.280px !important;">Formel:</span>
<div style="left:1581px;top:444px;width:324px;height:20px;background:#fff;border:1px solid #c9cad9"></div>
<span class="t " style="left:1513px;top:471.0px;line-height:14px;letter-spacing:-0.006px !important;">Zeilenart:</span>
<div style="left:1581px;top:468px;width:324px;height:20px;background:#fff;border:1px solid #c9cad9"></div>
<span class="t " style="left:1513px;top:495.0px;line-height:14px;letter-spacing:-0.184px !important;">Ergebnis:</span>
<div style="left:1581px;top:492px;width:324px;height:20px;background:#efeef3;border:1px solid #c9cad9"></div>
<span class="t " style="right:18.20px;top:208.0px;line-height:14px;">151</span>
<span class="t " style="right:18.20px;top:232.0px;line-height:14px;">1</span>
<span class="t " style="right:18.20px;top:256.0px;line-height:14px;">1</span>
<span class="t " style="right:18.20px;top:280.0px;line-height:14px;">1</span>
<span class="t " style="left:1585px;top:304.0px;line-height:14px;letter-spacing:0.169px !important;">01.01.01</span>
<svg style="left:1875.8px;top:306.9px" width="9.4" height="7.2" viewBox="0 0 9.4 7.2"><path d="M1,0.8 L8.4,6.4 M8.4,0.8 L1,6.4" stroke="#1a1a1a" stroke-width="2.1"/></svg>
<svg style="left:1893.0px;top:309px" width="7" height="4" viewBox="0 0 7 4"><path d="M0,0 H7 L3.5,4 Z" fill="#777"/></svg>
<span class="t " style="left:1585px;top:447.0px;line-height:14px;">91</span>
<svg style="left:1875.8px;top:449.9px" width="9.4" height="7.2" viewBox="0 0 9.4 7.2"><path d="M1,0.8 L8.4,6.4 M8.4,0.8 L1,6.4" stroke="#1a1a1a" stroke-width="2.1"/></svg>
<svg style="left:1893.0px;top:452px" width="7" height="4" viewBox="0 0 7 4"><path d="M0,0 H7 L3.5,4 Z" fill="#777"/></svg>
<span class="t " style="left:1585px;top:471.0px;line-height:14px;">Normal</span>
<svg style="left:1893.0px;top:476px" width="7" height="4" viewBox="0 0 7 4"><path d="M0,0 H7 L3.5,4 Z" fill="#777"/></svg>
<span class="t " style="right:18.33px;top:495.0px;line-height:14px;letter-spacing:-0.131px !important;">1,000</span>
<div style="left:1516px;top:424px;width:12px;height:12px;background:#fff;border:1px solid #d0d0d8"></div>
<span class="t " style="left:1531px;top:424.0px;line-height:14px;letter-spacing:-0.090px !important;">Markiert</span>
<div style="left:1513px;top:519px;width:392px;height:1px;background:#c9cad9"></div>
<span class="t " style="left:1513px;top:530.0px;line-height:14px;letter-spacing:0.162px !important;">Faktor:</span>
<div style="left:1580px;top:527px;width:325px;height:20px;background:#fff;border:1px solid #c9cad9"></div>
<span class="t " style="right:18.33px;top:530.0px;line-height:14px;letter-spacing:-0.131px !important;">1,000</span>
<div style="left:1580px;top:551px;width:325px;height:368px;background:#fff;border:1px solid #c9cad9"></div>
<div style="left:1887px;top:552px;width:17px;height:366px;background:#e2e2e4"></div>
<svg style="left:1891px;top:557px" width="9" height="6" viewBox="0 0 9 6"><path d="M0,5.5 H9 L4.5,0.5 Z" fill="#9a9a9e"/></svg>
<svg style="left:1891px;top:908px" width="9" height="6" viewBox="0 0 9 6"><path d="M0,0.5 H9 L4.5,5.5 Z" fill="#9a9a9e"/></svg>
<span class="t " style="left:1585px;top:553.0px;line-height:14px;font-size:10px">1</span>
<span class="t " style="left:1513px;top:729.0px;line-height:14px;letter-spacing:0.080px !important;">Formel-Text:</span>
<span class="t " style="left:1543.8px;top:936.2px;line-height:30px;letter-spacing:0.089px !important;font-size:24px;color:#1f9e2e;text-shadow:3.70px 0.00px 0.8px #fff,3.57px 0.96px 0.8px #fff,3.20px 1.85px 0.8px #fff,2.62px 2.62px 0.8px #fff,1.85px 3.20px 0.8px #fff,0.96px 3.57px 0.8px #fff,0.00px 3.70px 0.8px #fff,-0.96px 3.57px 0.8px #fff,-1.85px 3.20px 0.8px #fff,-2.62px 2.62px 0.8px #fff,-3.20px 1.85px 0.8px #fff,-3.57px 0.96px 0.8px #fff,-3.70px 0.00px 0.8px #fff,-3.57px -0.96px 0.8px #fff,-3.20px -1.85px 0.8px #fff,-2.62px -2.62px 0.8px #fff,-1.85px -3.20px 0.8px #fff,-0.96px -3.57px 0.8px #fff,-0.00px -3.70px 0.8px #fff,0.96px -3.57px 0.8px #fff,1.85px -3.20px 0.8px #fff,2.62px -2.62px 0.8px #fff,3.20px -1.85px 0.8px #fff,3.57px -0.96px 0.8px #fff,2.40px 0.00px 0.8px #fff,2.16px 1.04px 0.8px #fff,1.50px 1.88px 0.8px #fff,0.53px 2.34px 0.8px #fff,-0.53px 2.34px 0.8px #fff,-1.50px 1.88px 0.8px #fff,-2.16px 1.04px 0.8px #fff,-2.40px 0.00px 0.8px #fff,-2.16px -1.04px 0.8px #fff,-1.50px -1.88px 0.8px #fff,-0.53px -2.34px 0.8px #fff,0.53px -2.34px 0.8px #fff,1.50px -1.88px 0.8px #fff,2.16px -1.04px 0.8px #fff,1.20px 0.00px 0.8px #fff,0.85px 0.85px 0.8px #fff,0.00px 1.20px 0.8px #fff,-0.85px 0.85px 0.8px #fff,-1.20px 0.00px 0.8px #fff,-0.85px -0.85px 0.8px #fff,-0.00px -1.20px 0.8px #fff,0.85px -0.85px 0.8px #fff;">Detailfenster</span>
<div style="left:1706px;top:985px;width:207px;height:1px;background:#c9cad9"></div>
<span class="t " style="left:1508px;top:990.0px;line-height:14px;letter-spacing:-0.237px !important;color:#3a8be0">Details</span>
<span class="t " style="left:1551px;top:990.0px;line-height:14px;letter-spacing:-0.166px !important;">Positionsinformationen</span>
<span class="t " style="left:1670px;top:990.0px;line-height:14px;letter-spacing:-0.465px !important;">Bilder</span>
<div style="left:1501px;top:169px;width:416px;height:841px;border:4px solid #1f9e2e"></div>
<div style="left:1501px;top:983px;width:205px;height:27px;border:4px solid #1f9e2e"></div>
<div style="left:1547px;top:983px;width:4px;height:27px;background:#1f9e2e"></div>
<div style="left:1664px;top:983px;width:4.5px;height:27px;background:#1f9e2e"></div>
<div style="left:1501px;top:1010.3px;width:418px;height:1.7px;background:#fff"></div>
</body></html>
